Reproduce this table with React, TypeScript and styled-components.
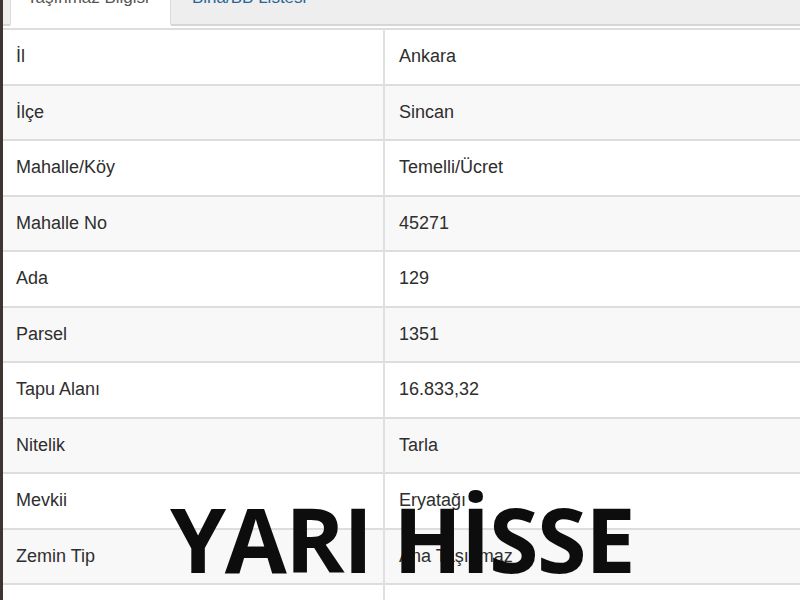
import React from "react";
import styled, { createGlobalStyle } from "styled-components";

const Global = createGlobalStyle`
  html, body { margin: 0; padding: 0; background: #fff; overflow: hidden; }
  body { font-family: "Liberation Sans", Arial, sans-serif; }
`;

const Frame = styled.div`
  position: relative;
  width: 800px;
  height: 600px;
  overflow: hidden;
  border-left: 3px solid #3b3631;
  box-sizing: border-box;
  background: #fff;
`;

const Inner = styled.div`
  margin-top: -16px;
`;

const TabBar = styled.div`
  display: flex;
  align-items: flex-end;
  gap: 4px;
  padding-left: 7px;
  background: #eeeeee;
  border-bottom: 2px solid #d6d6d6;
  height: 42px;
  box-sizing: border-box;
`;

const Tab = styled.div<{ $active?: boolean }>`
  box-sizing: border-box;
  height: 41px;
  margin-bottom: -2px;
  padding: 2px 16px 0;
  display: flex;
  align-items: flex-start;
  font-size: 17px;
  line-height: 20px;
  color: ${(p) => (p.$active ? "#555" : "#2a6496")};
  background: ${(p) => (p.$active ? "#ffffff" : "transparent")};
  border: 1px solid ${(p) => (p.$active ? "#dcdcdc" : "transparent")};
  border-bottom: 2px solid ${(p) => (p.$active ? "#ffffff" : "transparent")};
  width: ${(p) => (p.$active ? "161px" : "auto")};
`;

const Table = styled.table`
  width: 100%;
  border-collapse: collapse;
  table-layout: fixed;
  margin-top: 2px;
`;

const Row = styled.tr<{ $striped?: boolean }>`
  background: ${(p) => (p.$striped ? "#f8f8f8" : "#ffffff")};
  border-top: 2px solid #dddddd;
`;

const Cell = styled.td<{ $first?: boolean }>`
  height: 53.5px;
  padding: 0 0 0 ${(p) => (p.$first ? "13px" : "14px")};
  vertical-align: middle;
  font-size: 18px;
  color: #2e2e2e;
  border-left: ${(p) => (p.$first ? "none" : "2px solid #e0e0e0")};
  width: ${(p) => (p.$first ? "367px" : "auto")};
`;

const Overlay = styled.div`
  position: absolute;
  left: 167px;
  top: 478px;
  font-family: "Open Sans", "Noto Sans", sans-serif;
  font-weight: 700;
  font-size: 90px;
  line-height: 120px;
  letter-spacing: -1.5px;
  color: #0d0d0d;
  white-space: nowrap;
`;

const rows: [string, string][] = [
  ["İl", "Ankara"],
  ["İlçe", "Sincan"],
  ["Mahalle/Köy", "Temelli/Ücret"],
  ["Mahalle No", "45271"],
  ["Ada", "129"],
  ["Parsel", "1351"],
  ["Tapu Alanı", "16.833,32"],
  ["Nitelik", "Tarla"],
  ["Mevkii", "Eryatağı"],
  ["Zemin Tip", "Ana Taşınmaz"],
  ["Cilt", "5001 / 3412"],
];

export default function App() {
  return (
    <>
      <Global />
      <Frame>
        <Inner>
          <TabBar>
            <Tab $active>Taşınmaz Bilgisi</Tab>
            <Tab>Bina/BB Listesi</Tab>
          </TabBar>
          <Table>
            <tbody>
              {rows.map(([k, v], i) => (
                <Row key={k} $striped={i % 2 === 1}>
                  <Cell $first>{k}</Cell>
                  <Cell>{v}</Cell>
                </Row>
              ))}
            </tbody>
          </Table>
        </Inner>
        <Overlay>YARI HİSSE</Overlay>
      </Frame>
    </>
  );
}
